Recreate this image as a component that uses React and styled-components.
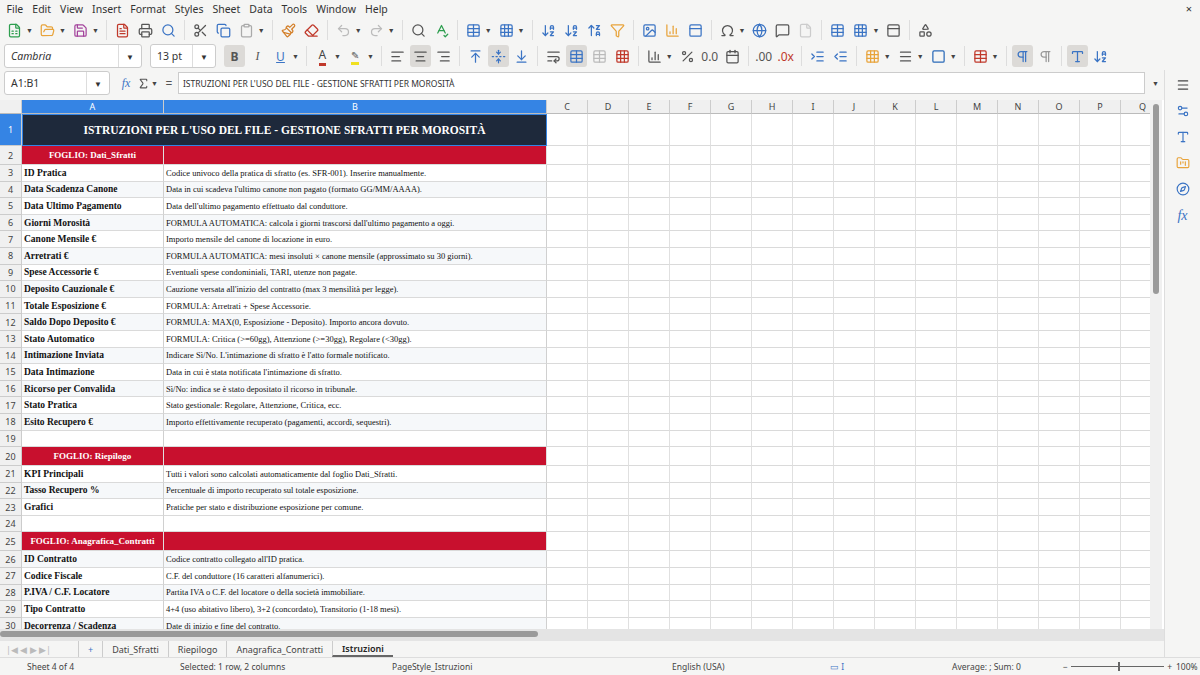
import React from "react";
import styled, { createGlobalStyle } from "styled-components";
import {
  FileSpreadsheet, FolderOpen, Save, FileText, Printer, Search, Scissors, Copy, Clipboard,
  Paintbrush, Eraser, Undo2, Redo2, SpellCheck, Table, Grid3x3, ArrowDownAZ, ArrowUpZA,
  Filter, Image, BarChart3, Sigma, Omega, Globe, MessageSquare, File, PanelTop, Shapes,
  AlignLeft, AlignCenter, AlignRight, ArrowUpToLine, FoldVertical, ArrowDownToLine, WrapText,
  Percent, Calendar, IndentIncrease, IndentDecrease, Square, Menu, Settings2, Type, FolderKanban,
  Compass, Pilcrow
} from "lucide-react";

const G = createGlobalStyle`
  html,body{margin:0;padding:0;background:#f5f5f4;font-family:"Noto Sans","Open Sans",sans-serif;overflow:hidden;}
`;

const Root = styled.div`width:1200px;height:675px;display:flex;flex-direction:column;font-size:11px;color:#333;`;
const MenuBar = styled.div`height:18px;display:flex;align-items:center;padding-left:2px;font-size:10.5px;color:#333;position:relative;`;
const MenuItem = styled.span`padding:0 4.5px;`;
const Close = styled.span`position:absolute;right:8px;top:1px;font-size:11px;`;
const Bar = styled.div`height:${p => p.h}px;display:flex;align-items:center;padding-left:4px;gap:2px;`;
const Ico = styled.div`width:${p => p.w || 21}px;height:22px;display:flex;align-items:center;justify-content:center;border-radius:3px;
  background:${p => p.on ? "#dcdad7" : "transparent"};color:${p => p.c || "#555"};font-size:12px;`;
const Caret = styled.span`font-size:7px;color:#444;margin:0 2px 0 -1px;`;
const Sep = styled.div`width:1px;height:20px;background:#ddd;margin:0 3px;`;
const Combo = styled.div`width:${p => p.w}px;height:22px;border:1px solid #ccc;border-radius:3px;background:#fff;display:flex;align-items:center;
  font-size:10.5px;font-style:${p => p.i ? "italic" : "normal"};color:#333;margin-right:6px;`;
const ComboText = styled.span`flex:1;padding-left:6px;`;
const ComboBtn = styled.span`width:22px;height:100%;border-left:1px solid #ddd;display:flex;align-items:center;justify-content:center;font-size:8px;`;
const FormulaInput = styled.div`flex:1;height:20px;border:1px solid #ccc;background:#fff;display:flex;align-items:center;padding-left:4px;font-size:8.5px;color:#333;`;

const Main = styled.div`flex:1;display:flex;min-height:0;`;
const SheetArea = styled.div`flex:1;display:flex;flex-direction:column;min-width:0;`;
const GridWrap = styled.div`flex:1;display:flex;min-height:0;background:#fff;margin-top:4px;`;
const Grid = styled.div`width:1150px;overflow:hidden;`;
const VScroll = styled.div`width:12px;background:#f0f0f0;position:relative;`;
const Thumb = styled.div`position:absolute;left:3px;top:4px;width:6px;height:190px;background:#9a9a9a;border-radius:3px;`;
const Row = styled.div`display:flex;height:${p => p.h}px;`;
const RH = styled.div`width:22px;flex:none;display:flex;align-items:center;justify-content:center;font-size:9px;
  background:${p => p.sel ? "#3584e4" : "#f0f0f0"};color:${p => p.sel ? "#fff" : "#444"};border-bottom:1px solid #ccc;border-right:1px solid #ccc;box-sizing:border-box;`;
const CH = styled.div`width:${p => p.w}px;flex:none;display:flex;align-items:center;justify-content:center;font-size:9px;box-sizing:border-box;
  background:${p => p.sel ? "#3584e4" : "#f0f0f0"};color:${p => p.sel ? "#fff" : "#444"};border-right:1px solid #ccc;border-bottom:1px solid #bbb;`;
const Cell = styled.div`width:${p => p.w}px;flex:none;box-sizing:border-box;border-right:1px solid ${p => p.dark ? "#d0d0d0" : "#e0e0e0"};border-bottom:1px solid #dadada;
  display:flex;align-items:center;overflow:hidden;white-space:nowrap;font-family:"Liberation Serif","DejaVu Serif",serif;
  background:${p => p.bg || "#fff"};color:${p => p.fg || "#111"};font-weight:${p => p.b ? 700 : 400};font-size:${p => p.fs || 9}px;
  justify-content:${p => p.center ? "center" : "flex-start"};padding-left:${p => p.center ? 0 : 2}px;`;
const Title = styled.div`width:525px;flex:none;box-sizing:border-box;background:#1e293b;color:#fff;border:1.5px solid #3584e4;display:flex;align-items:center;justify-content:center;
  font-family:"Liberation Serif","DejaVu Serif",serif;font-weight:700;font-size:11.5px;`;

const HScrollRow = styled.div`height:8px;background:#e4e4e4;display:flex;padding:2px 0;`;
const HThumb = styled.div`width:538px;height:6px;background:#9a9a9a;border-radius:3px;`;
const Tabs = styled.div`height:16px;display:flex;align-items:center;font-size:9px;color:#444;`;
const TabNav = styled.div`width:72px;color:#bbb;font-size:9px;padding-left:6px;`;
const Tab = styled.div`padding:0 9px;height:100%;display:flex;align-items:center;border-left:1px solid #ccc;
  ${p => p.on && "font-weight:600;color:#222;border-bottom:2px solid #666;box-sizing:border-box;"}`;
const Status = styled.div`height:17px;display:flex;align-items:center;font-size:8.5px;color:#444;border-top:1px solid #ddd;`;
const SItem = styled.div`width:${p => p.w}px;flex:none;padding-left:${p => p.pl || 0}px;box-sizing:border-box;white-space:nowrap;`;
const Zoom = styled.div`width:109px;flex:none;display:flex;align-items:center;gap:3px;`;
const ZLine = styled.div`flex:1;height:1px;background:#666;position:relative;`;
const ZKnob = styled.div`position:absolute;left:50%;top:-4px;width:2px;height:9px;background:#666;`;
const Side = styled.div`width:35px;flex:none;display:flex;flex-direction:column;align-items:center;gap:12px;padding-top:8px;border-left:1px solid #ddd;color:#3b74c4;`;

const cols = [["A",142],["B",383],["C",41],["D",41],["E",41],["F",41],["G",41],["H",41],["I",41],["J",41],["K",41],["L",41],["M",41],["N",41],["O",41],["P",41],["Q",44]];
const RED = "#c8102e";
const rows = [
  [3,"ID Pratica","Codice univoco della pratica di sfratto (es. SFR-001). Inserire manualmente."],
  [4,"Data Scadenza Canone","Data in cui scadeva l'ultimo canone non pagato (formato GG/MM/AAAA)."],
  [5,"Data Ultimo Pagamento","Data dell'ultimo pagamento effettuato dal conduttore."],
  [6,"Giorni Morosità","FORMULA AUTOMATICA: calcola i giorni trascorsi dall'ultimo pagamento a oggi."],
  [7,"Canone Mensile €","Importo mensile del canone di locazione in euro."],
  [8,"Arretrati €","FORMULA AUTOMATICA: mesi insoluti × canone mensile (approssimato su 30 giorni)."],
  [9,"Spese Accessorie €","Eventuali spese condominiali, TARI, utenze non pagate."],
  [10,"Deposito Cauzionale €","Cauzione versata all'inizio del contratto (max 3 mensilità per legge)."],
  [11,"Totale Esposizione €","FORMULA: Arretrati + Spese Accessorie."],
  [12,"Saldo Dopo Deposito €","FORMULA: MAX(0, Esposizione - Deposito). Importo ancora dovuto."],
  [13,"Stato Automatico","FORMULA: Critica (>=60gg), Attenzione (>=30gg), Regolare (<30gg)."],
  [14,"Intimazione Inviata","Indicare Sì/No. L'intimazione di sfratto è l'atto formale notificato."],
  [15,"Data Intimazione","Data in cui è stata notificata l'intimazione di sfratto."],
  [16,"Ricorso per Convalida","Sì/No: indica se è stato depositato il ricorso in tribunale."],
  [17,"Stato Pratica","Stato gestionale: Regolare, Attenzione, Critica, ecc."],
  [18,"Esito Recupero €","Importo effettivamente recuperato (pagamenti, accordi, sequestri)."],
  [19,"",""],
  [20,"H","FOGLIO: Riepilogo"],
  [21,"KPI Principali","Tutti i valori sono calcolati automaticamente dal foglio Dati_Sfratti."],
  [22,"Tasso Recupero %","Percentuale di importo recuperato sul totale esposizione."],
  [23,"Grafici","Pratiche per stato e distribuzione esposizione per comune."],
  [24,"",""],
  [25,"H","FOGLIO: Anagrafica_Contratti"],
  [26,"ID Contratto","Codice contratto collegato all'ID pratica."],
  [27,"Codice Fiscale","C.F. del conduttore (16 caratteri alfanumerici)."],
  [28,"P.IVA / C.F. Locatore","Partita IVA o C.F. del locatore o della società immobiliare."],
  [29,"Tipo Contratto","4+4 (uso abitativo libero), 3+2 (concordato), Transitorio (1-18 mesi)."],
  [30,"Decorrenza / Scadenza","Date di inizio e fine del contratto."],
];

const Rest = () => cols.slice(2).map(([n, w]) => <Cell key={n} w={w} />);

export default function App() {
  const i = 15;
  return (
    <Root>
      <G />
      <MenuBar>
        {["File","Edit","View","Insert","Format","Styles","Sheet","Data","Tools","Window","Help"].map(m => <MenuItem key={m}>{m}</MenuItem>)}
        <Close>×</Close>
      </MenuBar>
      <Bar h={24}>
        <Ico c="#2e9e4f"><FileSpreadsheet size={i}/></Ico><Caret>▼</Caret>
        <Ico c="#e8a33a"><FolderOpen size={i}/></Ico><Caret>▼</Caret>
        <Ico c="#a4449c"><Save size={i}/></Ico><Caret>▼</Caret><Sep/>
        <Ico c="#c0392b"><FileText size={i}/></Ico><Ico><Printer size={i}/></Ico><Ico c="#3b74c4"><Search size={i}/></Ico><Sep/>
        <Ico><Scissors size={i}/></Ico><Ico c="#3b74c4"><Copy size={i}/></Ico><Ico c="#aaa"><Clipboard size={i}/></Ico><Caret>▼</Caret><Sep/>
        <Ico c="#d4802b"><Paintbrush size={i}/></Ico><Ico c="#c0392b"><Eraser size={i}/></Ico><Sep/>
        <Ico c="#bbb"><Undo2 size={i}/></Ico><Caret>▼</Caret><Ico c="#bbb"><Redo2 size={i}/></Ico><Caret>▼</Caret><Sep/>
        <Ico><Search size={i}/></Ico><Ico c="#2e9e4f"><SpellCheck size={i}/></Ico><Sep/>
        <Ico c="#3b74c4"><Table size={i}/></Ico><Caret>▼</Caret><Ico c="#3b74c4"><Grid3x3 size={i}/></Ico><Caret>▼</Caret><Sep/>
        <Ico c="#3b74c4"><ArrowDownAZ size={i}/></Ico><Ico c="#3b74c4"><ArrowDownAZ size={i}/></Ico><Ico c="#3b74c4"><ArrowUpZA size={i}/></Ico><Ico c="#e8a33a"><Filter size={i}/></Ico><Sep/>
        <Ico c="#3b74c4"><Image size={i}/></Ico><Ico c="#e8a33a"><BarChart3 size={i}/></Ico><Ico c="#3b74c4"><PanelTop size={i}/></Ico><Sep/>
        <Ico><Omega size={i}/></Ico><Caret>▼</Caret><Ico c="#3b74c4"><Globe size={i}/></Ico><Ico><MessageSquare size={i}/></Ico><Ico c="#ccc"><File size={i}/></Ico><Sep/>
        <Ico c="#3b74c4"><Table size={i}/></Ico><Ico c="#3b74c4"><Grid3x3 size={i}/></Ico><Caret>▼</Caret><Ico><PanelTop size={i}/></Ico><Sep/>
        <Ico><Shapes size={i}/></Ico>
      </Bar>
      <Bar h={28}>
        <Combo w={136} i><ComboText>Cambria</ComboText><ComboBtn>▼</ComboBtn></Combo>
        <Combo w={64}><ComboText>13 pt</ComboText><ComboBtn>▼</ComboBtn></Combo>
        <Ico on><b>B</b></Ico><Ico><i style={{fontFamily:"serif"}}>I</i></Ico><Ico c="#3b74c4"><u>U</u></Ico><Caret>▼</Caret><Sep/>
        <Ico c="#c0392b"><span style={{borderBottom:"3px solid #c0392b",color:"#444"}}>A</span></Ico><Caret>▼</Caret>
        <Ico><span style={{borderBottom:"3px solid #f0e020",fontSize:10}}>✎</span></Ico><Caret>▼</Caret><Sep/>
        <Ico><AlignLeft size={i}/></Ico><Ico on><AlignCenter size={i}/></Ico><Ico><AlignRight size={i}/></Ico><Sep/>
        <Ico c="#3b74c4"><ArrowUpToLine size={i}/></Ico><Ico on c="#3b74c4"><FoldVertical size={i}/></Ico><Ico c="#3b74c4"><ArrowDownToLine size={i}/></Ico><Sep/>
        <Ico><WrapText size={i}/></Ico><Ico on c="#3b74c4"><Table size={i}/></Ico><Ico c="#bbb"><Table size={i}/></Ico><Ico c="#c0392b"><Grid3x3 size={i}/></Ico><Sep/>
        <Ico><BarChart3 size={i}/></Ico><Caret>▼</Caret><Ico><Percent size={i}/></Ico><Ico w={20}>0.0</Ico><Ico><Calendar size={i}/></Ico><Sep/>
        <Ico w={20}>.00</Ico><Ico w={20} c="#c0392b">.0x</Ico><Sep/>
        <Ico c="#3b74c4"><IndentIncrease size={i}/></Ico><Ico c="#3b74c4"><IndentDecrease size={i}/></Ico><Sep/>
        <Ico c="#e8a33a"><Grid3x3 size={i}/></Ico><Caret>▼</Caret><Ico><Menu size={i}/></Ico><Caret>▼</Caret><Ico c="#2a6ab8"><Square size={i}/></Ico><Caret>▼</Caret><Sep/>
        <Ico c="#c0392b"><Table size={i}/></Ico><Caret>▼</Caret><Sep/>
        <Ico on c="#3b74c4"><Pilcrow size={i}/></Ico><Ico c="#999"><Pilcrow size={i}/></Ico><Sep/>
        <Ico on c="#3b74c4"><Type size={i}/></Ico><Ico c="#3b74c4"><ArrowDownAZ size={i}/></Ico>
      </Bar>
      <Main>
        <SheetArea>
          <Bar h={26}>
            <Combo w={104}><ComboText>A1:B1</ComboText><ComboBtn>▼</ComboBtn></Combo>
            <Ico w={16} c="#3b74c4"><i style={{fontFamily:"serif"}}>fx</i></Ico><Ico w={14}><Sigma size={13}/></Ico><Caret>▼</Caret><Ico w={14}>=</Ico>
            <FormulaInput>ISTRUZIONI PER L'USO DEL FILE - GESTIONE SFRATTI PER MOROSITÀ</FormulaInput>
            <Caret style={{margin:"0 5px"}}>▼</Caret>
          </Bar>
          <GridWrap>
            <Grid>
              <Row h={14}>
                <CH w={22} />
                {cols.map(([n, w], k) => <CH key={n} w={w} sel={k < 2}>{n}</CH>)}
              </Row>
              <Row h={32}>
                <RH sel>1</RH>
                <Title>ISTRUZIONI PER L'USO DEL FILE - GESTIONE SFRATTI PER MOROSITÀ</Title>
                <Rest />
              </Row>
              <Row h={19}>
                <RH>2</RH>
                <Cell w={142} bg={RED} fg="#fff" b center>FOGLIO: Dati_Sfratti</Cell>
                <Cell w={383} bg={RED} />
                <Rest />
              </Row>
              {rows.map(([n, a, b]) => a === "H" ? (
                <Row h={19} key={n}>
                  <RH>{n}</RH>
                  <Cell w={142} bg={RED} fg="#fff" b center>{b}</Cell>
                  <Cell w={383} bg={RED} />
                  <Rest />
                </Row>
              ) : (
                <Row h={16.6} key={n}>
                  <RH>{n}</RH>
                  <Cell w={142} b fs={9.5} bg={n % 2 === 0 && a ? "#f6f8fa" : "#fff"} dark>{a}</Cell>
                  <Cell w={383} fs={8.5} bg={n % 2 === 0 && a ? "#f6f8fa" : "#fff"} dark>{b}</Cell>
                  <Rest />
                </Row>
              ))}
            </Grid>
            <VScroll><Thumb /></VScroll>
          </GridWrap>
          <HScrollRow><HThumb /></HScrollRow>
          <Tabs>
            <TabNav>|◀ ◀ ▶ ▶|</TabNav>
            <Tab style={{color:"#3b74c4"}}>+</Tab>
            <Tab>Dati_Sfratti</Tab><Tab>Riepilogo</Tab><Tab>Anagrafica_Contratti</Tab><Tab on>Istruzioni</Tab>
          </Tabs>
        </SheetArea>
        <Side>
          <Menu size={14} color="#444"/><Settings2 size={14}/><Type size={14}/><FolderKanban size={14} color="#e8a33a"/><Compass size={14}/><i style={{fontFamily:"serif",fontSize:14}}>fx</i>
        </Side>
      </Main>
      <Status>
        <SItem w={180} pl={27}>Sheet 4 of 4</SItem>
        <SItem w={212}>Selected: 1 row, 2 columns</SItem>
        <SItem w={280}>PageStyle_Istruzioni</SItem>
        <SItem w={158}>English (USA)</SItem>
        <SItem w={122} style={{color:"#3b74c4"}}>▭ I</SItem>
        <SItem w={111}>Average: ; Sum: 0</SItem>
        <Zoom><span>−</span><ZLine><ZKnob /></ZLine><span>+</span></Zoom>
        <SItem w={28} pl={4}>100%</SItem>
      </Status>
    </Root>
  );
}
